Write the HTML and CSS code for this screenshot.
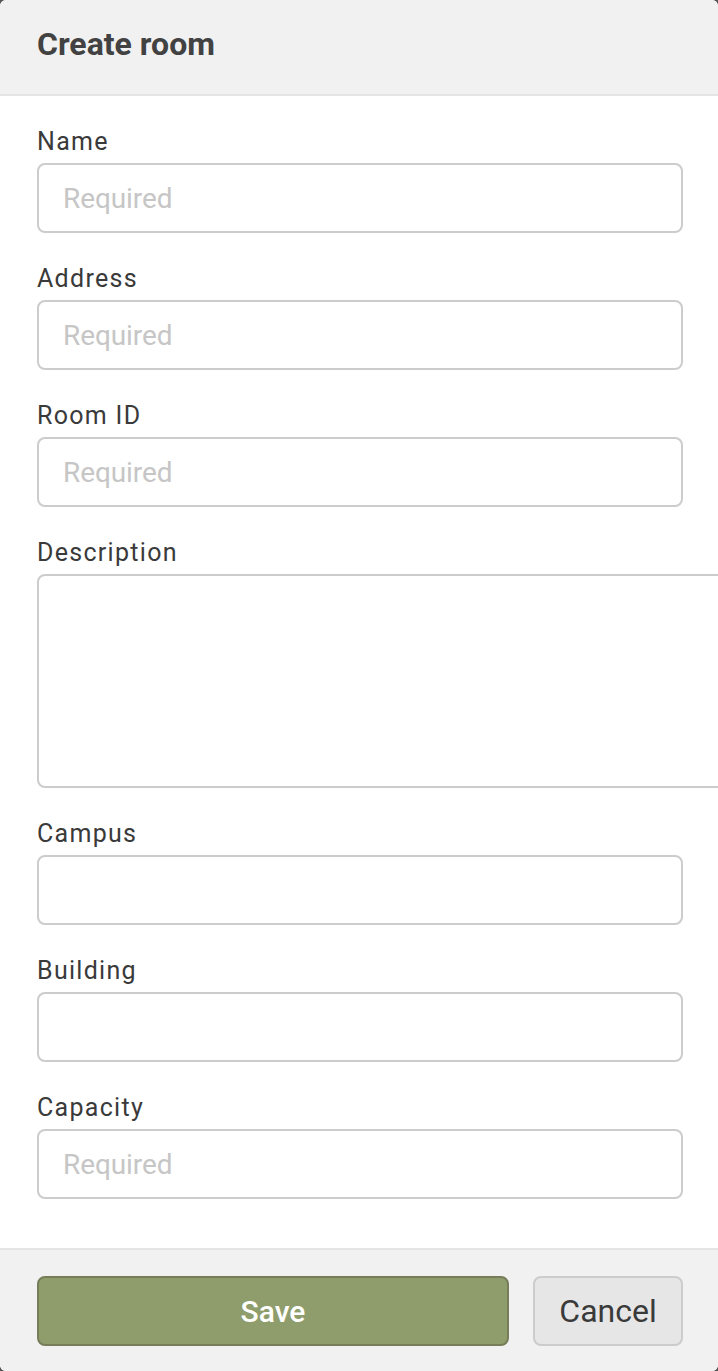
FILE: index.html
```html
<!DOCTYPE html>
<html lang="en">
<head>
<meta charset="utf-8">
<title>Create room</title>
<link rel="stylesheet" href="styles.css">
</head>
<body>
<div class="dialog">
  <header class="dialog-header">
    <h1 class="dialog-title">Create room</h1>
  </header>
  <form class="dialog-body">
    <label class="field">
      <span class="field-label">Name</span>
      <input class="field-input" type="text" placeholder="Required">
    </label>
    <label class="field">
      <span class="field-label">Address</span>
      <input class="field-input" type="text" placeholder="Required">
    </label>
    <label class="field">
      <span class="field-label">Room ID</span>
      <input class="field-input" type="text" placeholder="Required">
    </label>
    <label class="field">
      <span class="field-label">Description</span>
      <textarea class="field-input field-textarea"></textarea>
    </label>
    <label class="field">
      <span class="field-label">Campus</span>
      <input class="field-input" type="text">
    </label>
    <label class="field">
      <span class="field-label">Building</span>
      <input class="field-input" type="text">
    </label>
    <label class="field">
      <span class="field-label">Capacity</span>
      <input class="field-input" type="text" placeholder="Required">
    </label>
  </form>
  <footer class="dialog-footer">
    <button class="btn btn-save" type="button">Save</button>
    <button class="btn btn-cancel" type="button">Cancel</button>
  </footer>
</div>
</body>
</html>
```
FILE: styles.css
```css
html, body {
  margin: 0;
  padding: 0;
  background: #555555;
}
body {
  font-family: Roboto, "Noto Sans", sans-serif;
  overflow: hidden;
}
.dialog {
  width: 718px;
  height: 1371px;
  background: #ffffff;
  border-radius: 6px;
  overflow: hidden;
  display: flex;
  flex-direction: column;
}
.dialog-header {
  background: #f1f1f1;
  border-bottom: 2px solid #e4e4e4;
  padding: 24px 37px 30px;
}
.dialog-title {
  margin: 0;
  font-size: 32px;
  line-height: 40px;
  font-weight: 700;
  color: #424242;
}
.dialog-body {
  flex: 1;
  margin: 0;
  padding: 31px 35px 0 37px;
  display: flex;
  flex-direction: column;
  gap: 31px;
}
.field {
  display: flex;
  flex-direction: column;
  gap: 6px;
}
.field-label {
  font-size: 25px;
  line-height: 30px;
  letter-spacing: 1.3px;
  color: #3a3a3a;
}
.field-input {
  box-sizing: border-box;
  height: 70px;
  width: 100%;
  margin: 0;
  padding: 0 24px;
  border: 2px solid #cccccc;
  border-radius: 8px;
  background: #ffffff;
  font-family: Roboto, "Noto Sans", sans-serif;
  font-size: 28px;
  color: #3c3c3c;
  outline: none;
}
.field-input::placeholder {
  color: #c6c6c6;
  letter-spacing: -0.1px;
}
.field-textarea {
  width: 700px;
  height: 214px;
  padding: 14px 24px;
  resize: none;
}
.dialog-footer {
  background: #f1f1f1;
  border-top: 2px solid #e4e4e4;
  height: 123px;
  box-sizing: border-box;
  padding: 26px 35px 0 37px;
  display: flex;
  gap: 24px;
  align-items: flex-start;
}
.btn {
  box-sizing: border-box;
  height: 70px;
  margin: 0;
  border-radius: 8px;
  font-family: Roboto, "Noto Sans", sans-serif;
  cursor: pointer;
}
.btn-save {
  flex: 1;
  background: #8f9d6c;
  border: 2px solid #767d58;
  color: #ffffff;
  font-size: 30px;
  font-weight: 500;
}
.btn-cancel {
  width: 150px;
  background: #e6e6e6;
  border: 2px solid #cccccc;
  color: #3a3a3a;
  font-size: 32px;
  font-weight: 400;
}
```
